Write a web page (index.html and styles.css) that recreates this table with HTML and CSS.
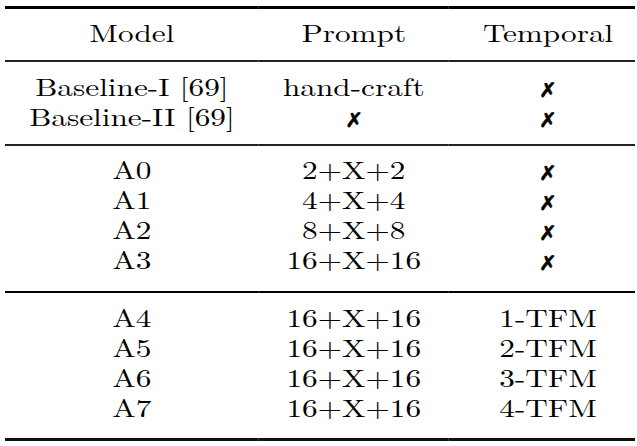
FILE: index.html
```html
<!DOCTYPE html>
<html lang="en">
<head>
    <meta charset="UTF-8">
    <meta name="viewport" content="width=device-width, initial-scale=1.0">
    <title>Ablation table</title>
    <link rel="stylesheet" href="styles.css">
</head>
<body>
    <table class="results">
        <colgroup>
            <col class="col-model">
            <col class="col-prompt">
            <col class="col-temporal">
        </colgroup>
        <thead>
            <tr>
                <th>Model</th>
                <th>Prompt</th>
                <th class="temporal">Temporal</th>
            </tr>
        </thead>
        <tbody class="sec-1">
            <tr class="first">
                <td>Baseline-I [69]</td>
                <td>hand-craft</td>
                <td class="temporal"><span class="no">✗</span></td>
            </tr>
            <tr class="end">
                <td>Baseline-II [69]</td>
                <td><span class="no">✗</span></td>
                <td class="temporal"><span class="no">✗</span></td>
            </tr>
        </tbody>
        <tbody class="sec-2">
            <tr class="first">
                <td>A0</td>
                <td>2+X+2</td>
                <td class="temporal"><span class="no">✗</span></td>
            </tr>
            <tr>
                <td>A1</td>
                <td>4+X+4</td>
                <td class="temporal"><span class="no">✗</span></td>
            </tr>
            <tr>
                <td>A2</td>
                <td>8+X+8</td>
                <td class="temporal"><span class="no">✗</span></td>
            </tr>
            <tr class="end">
                <td>A3</td>
                <td>16+X+16</td>
                <td class="temporal"><span class="no">✗</span></td>
            </tr>
        </tbody>
        <tbody class="sec-3">
            <tr class="first">
                <td>A4</td>
                <td>16+X+16</td>
                <td class="temporal">1-TFM</td>
            </tr>
            <tr>
                <td>A5</td>
                <td>16+X+16</td>
                <td class="temporal">2-TFM</td>
            </tr>
            <tr>
                <td>A6</td>
                <td>16+X+16</td>
                <td class="temporal">3-TFM</td>
            </tr>
            <tr class="end">
                <td>A7</td>
                <td>16+X+16</td>
                <td class="temporal">4-TFM</td>
            </tr>
        </tbody>
    </table>
</body>
</html>
```

FILE: styles.css
```css
body {
    margin: 0;
    background: #fff;
    color: #000;
    font-family: "Latin Modern Roman", "Liberation Serif", serif;
}

/* the source figure is rendered wide, so the whole table is stretched */
.results {
    margin: 6px 0 0 5px;
    width: 504px;
    table-layout: fixed;
    border-collapse: separate;
    border-spacing: 0;
    font-family: "Latin Modern Roman", "Liberation Serif", serif;
    font-size: 25px;
    transform: scaleX(1.25);
    transform-origin: 0 0;
}

.col-model {
    width: 203px;
}

.col-prompt {
    width: 152px;
}

.col-temporal {
    width: 149px;
}

.results th,
.results td {
    padding: 0;
    height: 30px;
    line-height: 30px;
    text-align: center;
    font-family: inherit;
    font-weight: normal;
    white-space: nowrap;
}

.results .temporal {
    padding-left: 10px;
}

/* rules (booktabs style) */
.results th {
    border-top: 3px solid #000;
    border-bottom: 2px solid #222;
    padding-top: 8px;
    padding-bottom: 13px;
}

.sec-1 .first td {
    padding-top: 9px;
}

.sec-1 .end td {
    padding-bottom: 13px;
    border-bottom: 2px solid #222;
}

.sec-2 .first td {
    padding-top: 8px;
}

.sec-2 .end td {
    padding-bottom: 17px;
    border-bottom: 2px solid #000;
}

.sec-3 .first td {
    padding-top: 9px;
}

.sec-3 .end td {
    padding-bottom: 16px;
    border-bottom: 3px solid #111;
}

.no {
    display: inline-block;
    line-height: 1;
    vertical-align: -1px;
    font-family: "DejaVu Sans", sans-serif;
    font-size: 20px;
    -webkit-text-stroke: 0.6px #000;
    transform: scaleX(0.85);
}
```
